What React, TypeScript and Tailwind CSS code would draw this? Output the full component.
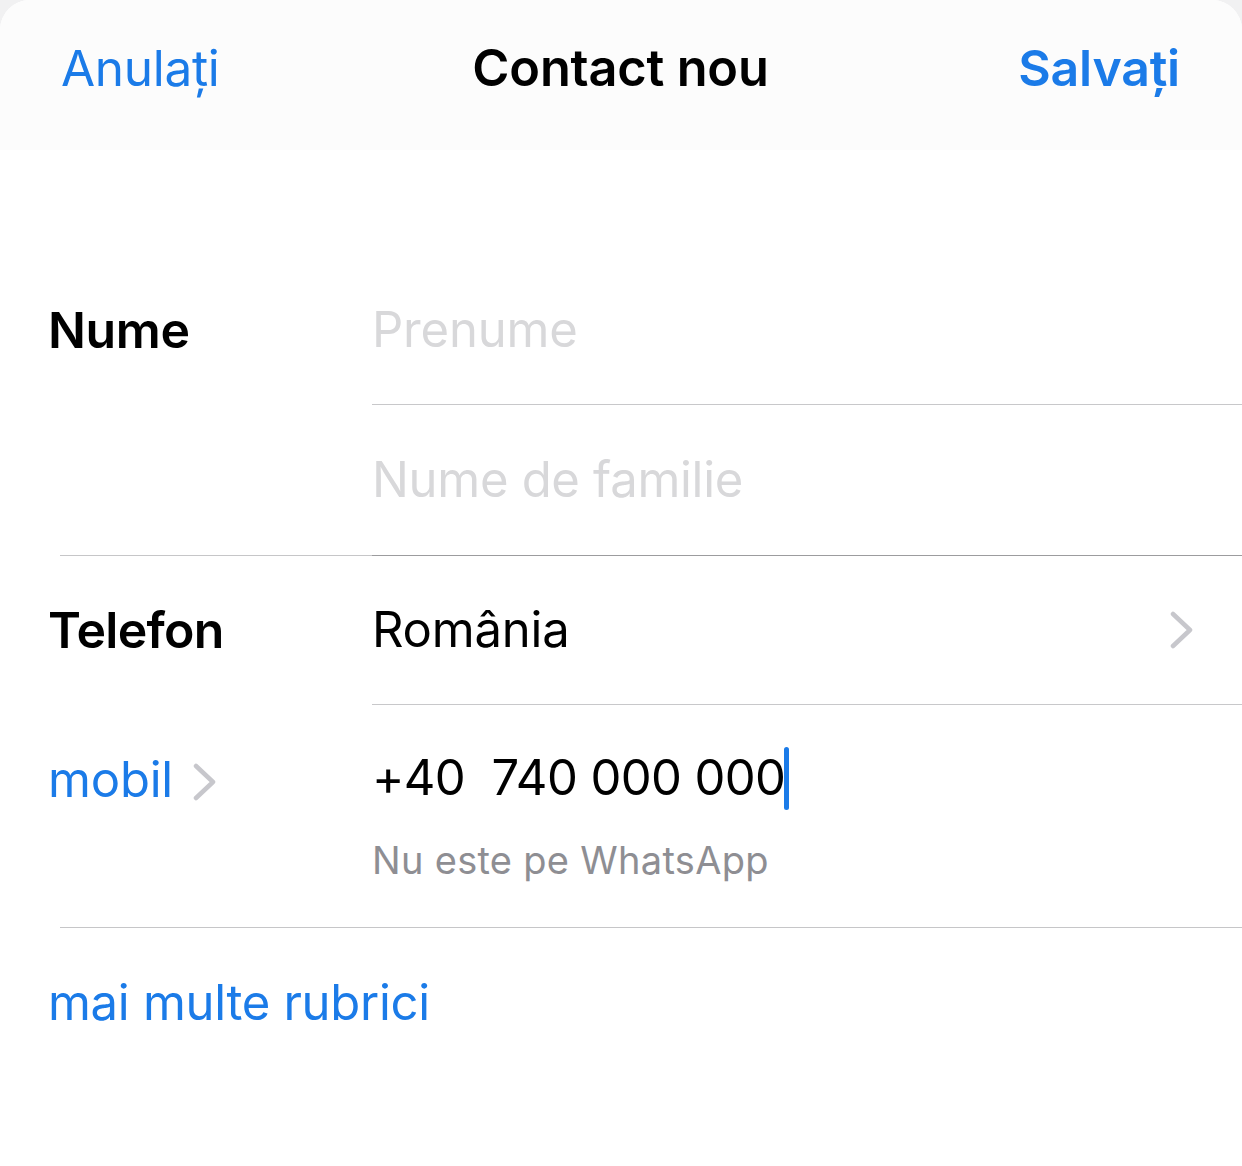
import React from 'react';

const font = { fontFamily: 'Inter, "Liberation Sans", sans-serif' };

const Chevron: React.FC<{ className?: string }> = ({ className }) => (
  <svg viewBox="0 0 24 38" className={className} fill="none">
    <path d="M3 3 L20 19 L3 35" stroke="#c7c7cc" strokeWidth="4.5" strokeLinecap="round" strokeLinejoin="round" />
  </svg>
);

const App: React.FC = () => {
  return (
    <div className="w-[1242px] h-[1166px] bg-[#f1f1f2] overflow-hidden" style={font}>
      <div className="h-full bg-white rounded-t-[30px] overflow-hidden">
        {/* header */}
        <div className="h-[150px] bg-[#fcfcfc] flex items-center justify-between pl-[61px] pr-[62px] pb-[14px]">
          <span className="text-[49.5px] text-[#1b7be8] tracking-[-0.3px] w-[300px]">Anulați</span>
          <span className="text-[50.5px] font-semibold text-black tracking-[-0.2px]">Contact nou</span>
          <span className="text-[50px] font-semibold text-[#1b7be8] tracking-[-0.2px] w-[300px] text-right">Salvați</span>
        </div>

        <div className="h-[105px]" />

        {/* name */}
        <div className="flex">
          <div className="w-[372px] pl-[48px] h-[150px] flex items-center text-[50px] font-semibold text-black tracking-[-0.4px]">
            Nume
          </div>
          <div className="flex-1">
            <div className="h-[150px] border-b border-[#c8c8ca] flex items-center text-[49px] text-[#d8d8da] tracking-[-0.2px]">
              Prenume
            </div>
            <div className="h-[150px] flex items-center text-[49px] text-[#d8d8da] tracking-[-0.3px]">
              Nume de familie
            </div>
          </div>
        </div>
        <div className="flex h-px">
          <div className="ml-[60px] w-[312px] bg-[#c6c6c8]" />
          <div className="flex-1 bg-[#9c9c9e]" />
        </div>

        {/* phone */}
        <div className="flex">
          <div className="w-[372px] pl-[48px] h-[149px] flex items-center text-[50px] font-semibold text-black tracking-[-0.7px]">
            Telefon
          </div>
          <div className="flex-1 h-[149px] border-b border-[#c8c8ca] flex items-center justify-between pr-[48px] text-[49px] text-black tracking-[-0.2px]">
            <span>România</span>
            <Chevron className="w-[24px] h-[38px]" />
          </div>
        </div>
        <div className="flex h-[222px]">
          <div className="w-[372px] pl-[48px] pt-[38px] flex items-start gap-[20px] text-[49px] text-[#1b7be8] tracking-[-0.2px]">
            <span>mobil</span>
            <Chevron className="w-[24px] h-[38px] mt-[20px]" />
          </div>
          <div className="flex-1 pt-[41px]">
            <div className="flex items-center text-[49px] text-black tracking-[-0.6px] leading-[64px]">
              <span className="whitespace-pre">+40  740 000 000</span>
              <span className="inline-block w-[5px] h-[63px] rounded-full bg-[#1b7be8] -ml-[1px]" />
            </div>
            <div className="mt-[26px] text-[38px] text-[#8e8e93] tracking-[0.3px] leading-[48px]">Nu este pe WhatsApp</div>
          </div>
        </div>
        <div className="ml-[60px] h-px bg-[#c6c6c8]" />

        <div className="h-[150px] flex items-center pl-[48px] text-[49px] text-[#1b7be8] tracking-[-0.3px]">
          mai multe rubrici
        </div>
      </div>
    </div>
  );
};

export default App;
